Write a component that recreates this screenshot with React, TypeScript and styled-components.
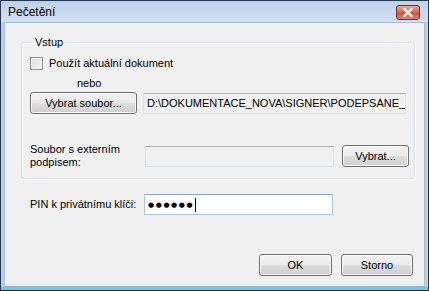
import styled, { createGlobalStyle } from "styled-components";

const GlobalStyle = createGlobalStyle`
  html, body {
    margin: 0;
    padding: 0;
    background: #ffffff;
  }
  body {
    font-family: "Liberation Sans", Arial, sans-serif;
    font-size: 11px;
    color: #000000;
  }
`;

const Window = styled.div`
  width: 429px;
  height: 291px;
  box-sizing: border-box;
  border: 1px solid #26384f;
  background: #b9d1ea;
  display: flex;
  flex-direction: column;
  padding: 0 3px 3px 3px;
  border-bottom-color: #1b2a3c;
  box-shadow: inset 0 -3px 0 #79c6df;
`;

const TitleBar = styled.div`
  height: 21px;
  display: flex;
  align-items: center;
  justify-content: space-between;
  margin: 0 -3px;
  padding: 0 8px 0 7px;
  background: linear-gradient(#bdd1ea, #d3e1f1);
`;

const Title = styled.span`
  font-size: 12px;
  color: #000000;
  padding-top: 1px;
`;

const CloseButton = styled.div`
  width: 24px;
  height: 15px;
  box-sizing: border-box;
  margin-top: 2px;
  border: 1px solid #7a2a1e;
  border-radius: 3px;
  background: linear-gradient(#e8a898 0%, #d46e58 45%, #c85440 55%, #dc8a78 100%);
  display: flex;
  align-items: center;
  justify-content: center;
`;

const Client = styled.div`
  flex: 1;
  background: #f0f0f0;
  border: 1px solid #a9bdd3;
  border-bottom-color: #8fb8cc;
  padding: 13px 11px 0 16px;
  display: flex;
  flex-direction: column;
`;

const Group = styled.fieldset`
  margin: 0;
  width: 392px;
  height: 143px;
  box-sizing: border-box;
  border: 1px solid #d5dfe5;
  border-radius: 3px;
  box-shadow: inset 1px 1px 0 #ffffff, 1px 1px 0 #ffffff;
  padding: 8px 5px 0 8px;
  display: flex;
  flex-direction: column;
`;

const Legend = styled.legend`
  padding: 0 1px;
  margin-left: 4px;
  font-size: 11px;
`;

const CheckRow = styled.label`
  display: flex;
  align-items: center;
  gap: 6px;
  height: 14px;
`;

const CheckBox = styled.span`
  width: 13px;
  height: 13px;
  box-sizing: border-box;
  border: 1px solid #8e8f8f;
  background: linear-gradient(135deg, #dcdcdc, #f6f6f6);
  box-shadow: inset 0 0 0 1px #f4f4f4;
`;

const OrText = styled.div`
  margin: 6px 0 0 47px;
  height: 14px;
  line-height: 14px;
`;

const Row = styled.div<{ $top: number }>`
  display: flex;
  align-items: center;
  margin-top: ${(p) => p.$top}px;
`;

const Button = styled.div<{ $w: number }>`
  width: ${(p) => p.$w}px;
  height: 22px;
  box-sizing: border-box;
  border: 1px solid #707070;
  border-radius: 3px;
  background: linear-gradient(#f2f2f2 0%, #ebebeb 48%, #dddddd 52%, #cfcfcf 100%);
  box-shadow: inset 0 0 0 1px #fbfbfb;
  display: flex;
  align-items: center;
  justify-content: center;
  flex-shrink: 0;
`;

const Field = styled.div<{ $w: number; $bg?: string }>`
  width: ${(p) => p.$w}px;
  height: 21px;
  box-sizing: border-box;
  border: 1px solid #dbdfe6;
  border-top-color: #abadb3;
  background: ${(p) => p.$bg ?? "#ffffff"};
  display: flex;
  align-items: center;
  padding-left: 3px;
  white-space: nowrap;
  overflow: hidden;
  flex-shrink: 0;
`;

const Label = styled.div<{ $w: number }>`
  width: ${(p) => p.$w}px;
  line-height: 13px;
  flex-shrink: 0;
`;

const PinRow = styled.div`
  display: flex;
  align-items: center;
  margin: 15px 0 0 9px;
`;

const Dots = styled.span`
  font-size: 7px;
  letter-spacing: 1.6px;
  font-family: "DejaVu Sans", sans-serif;
`;

const Caret = styled.span`
  width: 1px;
  height: 14px;
  background: #000000;
  margin-left: 1px;
`;

const Footer = styled.div`
  margin-top: auto;
  margin-bottom: 10px;
  display: flex;
  justify-content: flex-end;
  gap: 9px;
`;

export default function App() {
  return (
    <>
      <GlobalStyle />
      <Window>
        <TitleBar>
          <Title>Pečetění</Title>
          <CloseButton>
            <svg width="10" height="9" viewBox="0 0 10 9">
              <path
                d="M1.5 1 L8.5 8 M8.5 1 L1.5 8"
                stroke="#ffffff"
                strokeWidth="2.2"
                strokeLinecap="square"
              />
            </svg>
          </CloseButton>
        </TitleBar>
        <Client>
          <Group>
            <Legend>Vstup</Legend>
            <CheckRow>
              <CheckBox />
              <span>Použít aktuální dokument</span>
            </CheckRow>
            <OrText>nebo</OrText>
            <Row $top={2}>
              <Button $w={107}>Vybrat soubor...</Button>
              <Field $w={263} $bg="#f0f0f0" style={{ marginLeft: 6 }}>
                D:\DOKUMENTACE_NOVA\SIGNER\PODEPSANE_
              </Field>
            </Row>
            <Row $top={29}>
              <Label $w={115}>
                Soubor s externím
                <br />
                podpisem:
              </Label>
              <Field $w={189} $bg="#f0f0f0" />
              <Button $w={67} style={{ marginLeft: 8 }}>
                Vybrat...
              </Button>
            </Row>
          </Group>
          <PinRow>
            <Label $w={114}>PIN k privátnímu klíči:</Label>
            <Field $w={189} style={{ borderColor: "#a9c9e6", borderTopColor: "#7fa9d3" }}>
              <Dots>●●●●●●</Dots>
              <Caret />
            </Field>
          </PinRow>
          <Footer>
            <Button $w={73}>OK</Button>
            <Button $w={72}>Storno</Button>
          </Footer>
        </Client>
      </Window>
    </>
  );
}
